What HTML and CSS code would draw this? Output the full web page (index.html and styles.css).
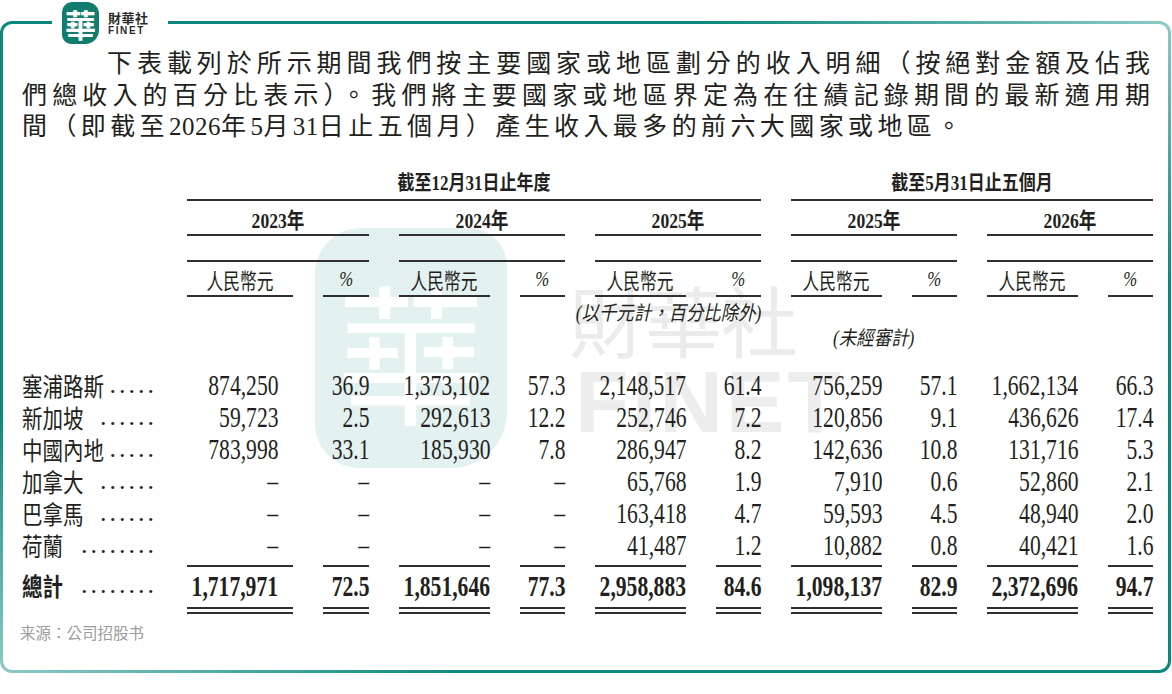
FILE: index.html
```html
<!DOCTYPE html>
<html lang="zh-Hant">
<head>
<meta charset="utf-8">
<title>收入明細</title>
<link rel="stylesheet" href="styles.css">
</head>
<body>
<div class="frame">
  <div class="logo">
    <div class="badge"><span>華</span></div>
    <div class="brand"><div class="cn">財華社</div><div class="en">FINET</div></div>
  </div>
  <div class="wm">
    <div class="wm-badge"><span>華</span></div>
    <div class="wm-cn">財華社</div>
    <div class="wm-en">FINET</div>
  </div>
  <div class="content">
    <div class="para">
      <div class="pl l1">下表載列於所示期間我們按主要國家或地區劃分的收入明細（按絕對金額及佔我</div>
      <div class="pl l2">們總收入的百分比表示）。我們將主要國家或地區界定為在往績記錄期間的最新適用期</div>
      <div class="pl l3">間（即截至<span class="dg">2026</span>年<span class="dg">5</span>月<span class="dg">31</span>日止五個月）產生收入最多的前六大國家或地區。</div>
    </div>
    <div class="tbl">
      <!-- row 1 -->
      <div></div>
      <div class="gh g6"><span>截至12月31日止年度</span></div>
      <div class="gh g4"><span>截至5月31日止五個月</span></div>
      <!-- row 2 -->
      <div></div>
      <div class="yr g2"><span>2023年</span></div>
      <div class="yr g2"><span>2024年</span></div>
      <div class="yr g2"><span>2025年</span></div>
      <div class="yr g2"><span>2025年</span></div>
      <div class="yr g2"><span>2026年</span></div>
      <!-- row 3 -->
      <div></div>
      <div class="sp g2"></div><div class="sp g2"></div><div class="sp g2"></div><div class="sp g2"></div><div class="sp g2"></div>
      <!-- row 4 -->
      <div></div>
      <div class="u"><span>人民幣元</span></div><div class="u pc"><span>%</span></div>
      <div class="u"><span>人民幣元</span></div><div class="u pc"><span>%</span></div>
      <div class="u"><span>人民幣元</span></div><div class="u pc"><span>%</span></div>
      <div class="u"><span>人民幣元</span></div><div class="u pc"><span>%</span></div>
      <div class="u"><span>人民幣元</span></div><div class="u pc"><span>%</span></div>
      <!-- row 5 -->
      <div></div><div></div><div></div><div></div><div></div>
      <div class="note n1 g2"><span>(以千元計，百分比除外)</span></div>
      <div></div><div></div><div></div><div></div>
      <!-- row 6 -->
      <div></div><div></div><div></div><div></div><div></div><div></div><div></div>
      <div class="note n2 g2"><span>(未經審計)</span></div>
      <div></div><div></div>

      <!-- data -->
      <div class="lb"><span class="nm">塞浦路斯</span><span class="dots">.....</span></div>
      <div class="v c1"><span>874,250</span></div><div class="v"><span>36.9</span></div>
      <div class="v"><span>1,373,102</span></div><div class="v"><span>57.3</span></div>
      <div class="v"><span>2,148,517</span></div><div class="v"><span>61.4</span></div>
      <div class="v"><span>756,259</span></div><div class="v"><span>57.1</span></div>
      <div class="v"><span>1,662,134</span></div><div class="v"><span>66.3</span></div>

      <div class="lb"><span class="nm">新加坡</span><span class="dots">......</span></div>
      <div class="v c1"><span>59,723</span></div><div class="v"><span>2.5</span></div>
      <div class="v"><span>292,613</span></div><div class="v"><span>12.2</span></div>
      <div class="v"><span>252,746</span></div><div class="v"><span>7.2</span></div>
      <div class="v"><span>120,856</span></div><div class="v"><span>9.1</span></div>
      <div class="v"><span>436,626</span></div><div class="v"><span>17.4</span></div>

      <div class="lb"><span class="nm">中國內地</span><span class="dots">.....</span></div>
      <div class="v c1"><span>783,998</span></div><div class="v"><span>33.1</span></div>
      <div class="v"><span>185,930</span></div><div class="v"><span>7.8</span></div>
      <div class="v"><span>286,947</span></div><div class="v"><span>8.2</span></div>
      <div class="v"><span>142,636</span></div><div class="v"><span>10.8</span></div>
      <div class="v"><span>131,716</span></div><div class="v"><span>5.3</span></div>

      <div class="lb"><span class="nm">加拿大</span><span class="dots">......</span></div>
      <div class="v c1"><span>–</span></div><div class="v"><span>–</span></div>
      <div class="v"><span>–</span></div><div class="v"><span>–</span></div>
      <div class="v"><span>65,768</span></div><div class="v"><span>1.9</span></div>
      <div class="v"><span>7,910</span></div><div class="v"><span>0.6</span></div>
      <div class="v"><span>52,860</span></div><div class="v"><span>2.1</span></div>

      <div class="lb"><span class="nm">巴拿馬</span><span class="dots">......</span></div>
      <div class="v c1"><span>–</span></div><div class="v"><span>–</span></div>
      <div class="v"><span>–</span></div><div class="v"><span>–</span></div>
      <div class="v"><span>163,418</span></div><div class="v"><span>4.7</span></div>
      <div class="v"><span>59,593</span></div><div class="v"><span>4.5</span></div>
      <div class="v"><span>48,940</span></div><div class="v"><span>2.0</span></div>

      <div class="lb"><span class="nm">荷蘭</span><span class="dots">........</span></div>
      <div class="v c1"><span>–</span></div><div class="v"><span>–</span></div>
      <div class="v"><span>–</span></div><div class="v"><span>–</span></div>
      <div class="v"><span>41,487</span></div><div class="v"><span>1.2</span></div>
      <div class="v"><span>10,882</span></div><div class="v"><span>0.8</span></div>
      <div class="v"><span>40,421</span></div><div class="v"><span>1.6</span></div>

      <div class="lb tl"><span class="nm">總計</span><span class="dots">........</span></div>
      <div class="v tot c1"><span>1,717,971</span></div><div class="v tot"><span>72.5</span></div>
      <div class="v tot"><span>1,851,646</span></div><div class="v tot"><span>77.3</span></div>
      <div class="v tot"><span>2,958,883</span></div><div class="v tot"><span>84.6</span></div>
      <div class="v tot"><span>1,098,137</span></div><div class="v tot"><span>82.9</span></div>
      <div class="v tot"><span>2,372,696</span></div><div class="v tot"><span>94.7</span></div>
    </div>
    <div class="src">来源：公司招股书</div>
  </div>
</div>
</body>
</html>
```

FILE: styles.css
```css
* { box-sizing: border-box; }

body {
  margin: 0;
  background: #fff;
  color: #231f20;
  font-family: "Liberation Serif", "Noto Sans CJK TC", serif;
}

.frame {
  position: relative;
  margin: 21px 1px 0 0;
  height: 652px;
  border: 3px solid transparent;
  border-radius: 12px;
  background:
    linear-gradient(#fff, #fff) padding-box,
    linear-gradient(to bottom right, #0b877d 0%, #0b877d 30%, #8ccac5 50%, #0b877d 70%, #0b877d 100%) border-box;
}

/* top logo */
.logo {
  position: absolute;
  left: 49px;
  top: -24px;
  width: 116px;
  height: 46px;
  background: #fff;
  display: flex;
  align-items: flex-start;
  padding-left: 10px;
  padding-top: 2px;
  z-index: 2;
}
.badge {
  width: 37px;
  height: 42px;
  background: #127c6f;
  border-radius: 10px 12px 14px 9px;
  display: flex;
  align-items: center;
  justify-content: center;
}
.badge span {
  color: #fff;
  font-family: "Noto Sans CJK TC", sans-serif;
  font-weight: 700;
  font-size: 31px;
  line-height: 1;
}
.brand {
  margin-left: 9px;
  margin-top: 9px;
  color: #2b2b2b;
}
.brand .cn {
  font-family: "Noto Sans CJK TC", sans-serif;
  font-weight: 700;
  font-size: 13px;
  line-height: 13px;
  letter-spacing: 0.5px;
}
.brand .en {
  font-family: "Liberation Sans", sans-serif;
  font-weight: 700;
  font-size: 10px;
  line-height: 11px;
  letter-spacing: 1.6px;
  margin-top: 1px;
}

/* watermark */
.wm { position: absolute; inset: 0; z-index: 0; pointer-events: none; }
.wm-badge {
  position: absolute;
  left: 312px;
  top: 204px;
  width: 192px;
  height: 240px;
  background: #e3f1f0;
  border-radius: 46px 38px 56px 44px;
  display: flex;
  align-items: center;
  justify-content: center;
}
.wm-badge span {
  color: #fff;
  font-family: "Noto Sans CJK TC", sans-serif;
  font-weight: 400;
  font-size: 150px;
  line-height: 160px;
}
.wm-cn {
  position: absolute;
  left: 566px;
  top: 250px;
  font-family: "Noto Sans CJK TC", sans-serif;
  font-size: 77px;
  line-height: 90px;
  color: #ebebeb;
  letter-spacing: -1px;
}
.wm-en {
  position: absolute;
  left: 572px;
  top: 333px;
  font-family: "Liberation Sans", sans-serif;
  font-weight: 700;
  font-size: 88px;
  line-height: 90px;
  color: #ededed;
  letter-spacing: 3px;
}

.content {
  position: relative;
  z-index: 1;
  padding: 24px 15px 0 19px;
}

/* paragraph */
.pl {
  font-size: 25px;
  line-height: 31.5px;
  white-space: nowrap;
}
.l1, .l2 {
  text-align: justify;
  text-align-last: justify;
  letter-spacing: 3px;
  white-space: normal;
}
.l1 { padding-left: 85px; }
.l3 { letter-spacing: 4.4px; }
.dg { letter-spacing: 0.5px; }

/* table */
.tbl {
  margin-top: 21.5px;
  display: grid;
  grid-template-columns: 135px 106px 46px 91px 45px 91px 45px 91px 45px 91px 45px;
  grid-template-rows: 37px 35px 26px 35px 28px 44px repeat(6, 32px) 53px;
  column-gap: 30px;
}
.g6 { grid-column: span 6; }
.g4 { grid-column: span 4; }
.g2 { grid-column: span 2; }

.gh, .yr, .sp, .u { border-bottom: 2px solid #2f2f2f; }

.gh, .yr, .u, .note {
  display: flex;
  align-items: center;
  justify-content: center;
  white-space: nowrap;
}
.gh span {
  display: inline-block;
  font-weight: 700;
  font-size: 20px;
  transform: scaleX(0.85);
}
.yr span {
  display: inline-block;
  font-weight: 700;
  font-size: 22px;
  transform: scaleX(0.8);
}
.u span {
  display: inline-block;
  font-size: 22px;
  transform: scaleX(0.76);
}
.u.pc span { font-style: italic; }

.note span {
  display: inline-block;
  font-style: italic;
  font-size: 20px;
  line-height: 24px;
  transform: scaleX(0.87);
}
.n1 { justify-content: flex-end; padding-top: 3px; }
.n1 span { transform-origin: right center; }
.n2 { align-items: flex-start; padding-top: 1px; }

.lb {
  display: flex;
  align-items: center;
  white-space: nowrap;
}
.lb .nm {
  display: inline-block;
  width: 0;
  font-size: 25px;
  transform: scaleX(0.82);
  transform-origin: left center;
}
.lb .dots {
  margin-left: auto;
  font-size: 26px;
  letter-spacing: 3px;
}
.tl .nm { font-weight: 700; }
.tl { margin-top: 4px; padding-bottom: 9px; }

.v {
  display: flex;
  justify-content: flex-end;
  align-items: center;
  white-space: nowrap;
}
.v span {
  display: inline-block;
  font-size: 30px;
  line-height: 32px;
  transform: scaleX(0.72);
  transform-origin: right center;
}
.c1 { padding-right: 15px; }

.tot {
  margin-top: 4px;
  border-top: 2px solid #2f2f2f;
  border-bottom: 7px double #2f2f2f;
  padding-bottom: 3px;
}
.tot span { font-weight: 700; }

.src {
  margin-top: 8px;
  margin-left: -2px;
  font-family: "Noto Sans CJK SC", sans-serif;
  font-size: 15.5px;
  line-height: 20px;
  color: #9c9c9c;
}
```
